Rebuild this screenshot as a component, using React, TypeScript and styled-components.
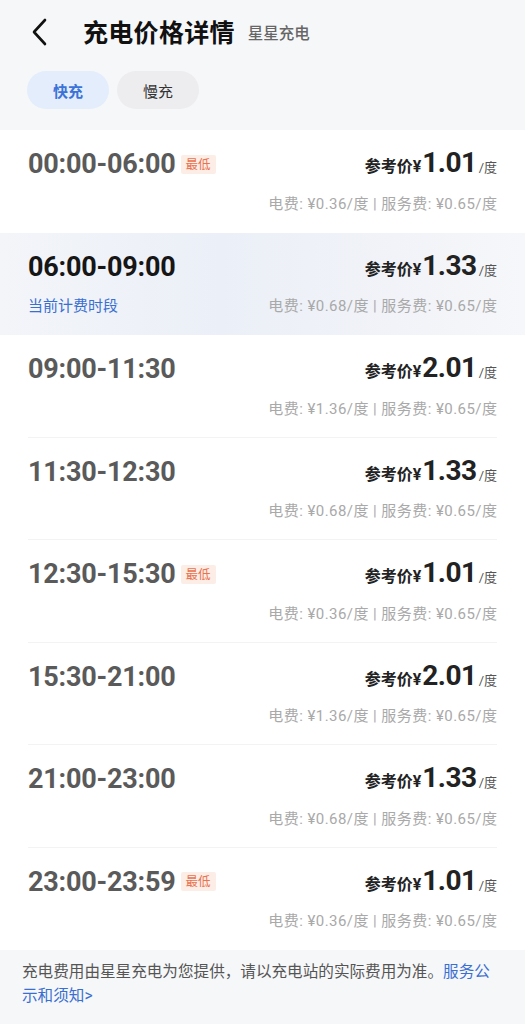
import styled, { createGlobalStyle } from "styled-components";

const GlobalStyle = createGlobalStyle`
  html, body {
    margin: 0;
    padding: 0;
    background: #f6f7f9;
  }
  body {
    font-family: Roboto, "Noto Sans CJK SC", sans-serif;
    -webkit-font-smoothing: antialiased;
  }
`;

const Page = styled.div`
  width: 525px;
  min-height: 1024px;
  background: #f6f7f9;
  display: flex;
  flex-direction: column;
`;

const Header = styled.div`
  height: 62px;
  display: flex;
  align-items: center;
  padding: 0 0 0 30px;
`;

const BackButton = styled.div`
  width: 22px;
  height: 28px;
  display: flex;
  align-items: center;
  margin-right: 31px;
  margin-top: 1px;
`;

const Title = styled.h1`
  margin: 0;
  font-size: 25px;
  font-weight: 700;
  color: #111;
  letter-spacing: 0.3px;
`;

const SubTitle = styled.span`
  margin-left: 13px;
  margin-top: 2px;
  font-size: 15.5px;
  color: #666;
  font-weight: 500;
`;

const Tabs = styled.div`
  display: flex;
  gap: 8px;
  padding: 9px 27px 0;
  height: 68px;
  box-sizing: border-box;
`;

const Tab = styled.div<{ $active?: boolean }>`
  width: 82px;
  height: 38px;
  border-radius: 19px;
  display: flex;
  align-items: center;
  justify-content: center;
  font-size: 15px;
  font-weight: ${(p) => (p.$active ? 700 : 400)};
  color: ${(p) => (p.$active ? "#3b73d8" : "#333")};
  background: ${(p) => (p.$active ? "#e4edfb" : "#ededef")};
`;

const List = styled.div`
  background: #fff;
`;

const Row = styled.div<{ $current?: boolean; $divider?: boolean }>`
  position: relative;
  height: 102.5px;
  box-sizing: border-box;
  padding: 17px 28px 0;
  background: ${(p) =>
    p.$current
      ? "linear-gradient(90deg, #f3f5f9 0%, #ebeff7 42%, #f1f3f8 75%, #f6f7fa 100%)"
      : "#fff"};

  &::after {
    content: "";
    display: ${(p) => (p.$divider ? "block" : "none")};
    position: absolute;
    left: 28px;
    right: 28px;
    bottom: 0;
    height: 1px;
    background: #f3f3f4;
  }
`;

const Line = styled.div`
  display: flex;
  justify-content: space-between;
  align-items: center;
  height: 34px;
`;

const TimeWrap = styled.div`
  display: flex;
  align-items: center;
`;

const Time = styled.span<{ $current?: boolean }>`
  font-size: 27px;
  font-weight: 700;
  letter-spacing: -0.2px;
  color: ${(p) => (p.$current ? "#161616" : "#5a5a5a")};
`;

const Badge = styled.span`
  margin-left: 5px;
  padding: 1px 5px;
  font-size: 12.5px;
  line-height: 17px;
  color: #e8734f;
  background: #fdede7;
  border-radius: 2px;
`;

const Price = styled.div`
  display: flex;
  align-items: baseline;
  color: #222;
  margin-top: -3px;
`;

const PriceLabel = styled.span`
  font-size: 16px;
  font-weight: 700;
`;

const PriceValue = styled.span`
  font-size: 28px;
  font-weight: 700;
  letter-spacing: -0.5px;
  margin-left: 1px;
`;

const PriceUnit = styled.span`
  font-size: 13px;
  color: #555;
  margin-left: 2px;
`;

const SubLine = styled.div`
  display: flex;
  justify-content: space-between;
  align-items: center;
  margin-top: 10px;
  height: 22px;
`;

const CurrentTag = styled.span`
  font-size: 15px;
  color: #3a6fd1;
`;

const Detail = styled.span`
  font-size: 15px;
  letter-spacing: 0.45px;
  color: #a9a9a9;
  margin-left: auto;
  margin-right: -0.45px;
`;

const Footer = styled.div`
  padding: 10px 33px 20px 22px;
  font-size: 15.6px;
  line-height: 24px;
  color: #555;
`;

const Link = styled.span`
  color: #3a6fd1;
`;

type Slot = {
  time: string;
  price: string;
  elec: string;
  lowest?: boolean;
  current?: boolean;
};

const slots: Slot[] = [
  { time: "00:00-06:00", price: "1.01", elec: "0.36", lowest: true },
  { time: "06:00-09:00", price: "1.33", elec: "0.68", current: true },
  { time: "09:00-11:30", price: "2.01", elec: "1.36" },
  { time: "11:30-12:30", price: "1.33", elec: "0.68" },
  { time: "12:30-15:30", price: "1.01", elec: "0.36", lowest: true },
  { time: "15:30-21:00", price: "2.01", elec: "1.36" },
  { time: "21:00-23:00", price: "1.33", elec: "0.68" },
  { time: "23:00-23:59", price: "1.01", elec: "0.36", lowest: true },
];

const App = () => {
  return (
    <Page>
      <GlobalStyle />
      <Header>
        <BackButton>
          <svg width="18" height="28" viewBox="0 0 18 28" fill="none">
            <path
              d="M15 2 L4 14 L15 26"
              stroke="#111"
              strokeWidth="2.6"
              strokeLinecap="round"
              strokeLinejoin="round"
            />
          </svg>
        </BackButton>
        <Title>充电价格详情</Title>
        <SubTitle>星星充电</SubTitle>
      </Header>
      <Tabs>
        <Tab $active>快充</Tab>
        <Tab>慢充</Tab>
      </Tabs>
      <List>
        {slots.map((s, i) => {
          const next = slots[i + 1];
          const divider = !s.current && !!next && !next.current;
          return (
            <Row key={s.time} $current={s.current} $divider={divider}>
              <Line>
                <TimeWrap>
                  <Time $current={s.current}>{s.time}</Time>
                  {s.lowest && <Badge>最低</Badge>}
                </TimeWrap>
                <Price>
                  <PriceLabel>参考价¥</PriceLabel>
                  <PriceValue>{s.price}</PriceValue>
                  <PriceUnit>/度</PriceUnit>
                </Price>
              </Line>
              <SubLine>
                {s.current && <CurrentTag>当前计费时段</CurrentTag>}
                <Detail>
                  电费: ¥{s.elec}/度 | 服务费: ¥0.65/度
                </Detail>
              </SubLine>
            </Row>
          );
        })}
      </List>
      <Footer>
        充电费用由星星充电为您提供，请以充电站的实际费用为准。
        <Link>服务公示和须知&gt;</Link>
      </Footer>
    </Page>
  );
};

export default App;
